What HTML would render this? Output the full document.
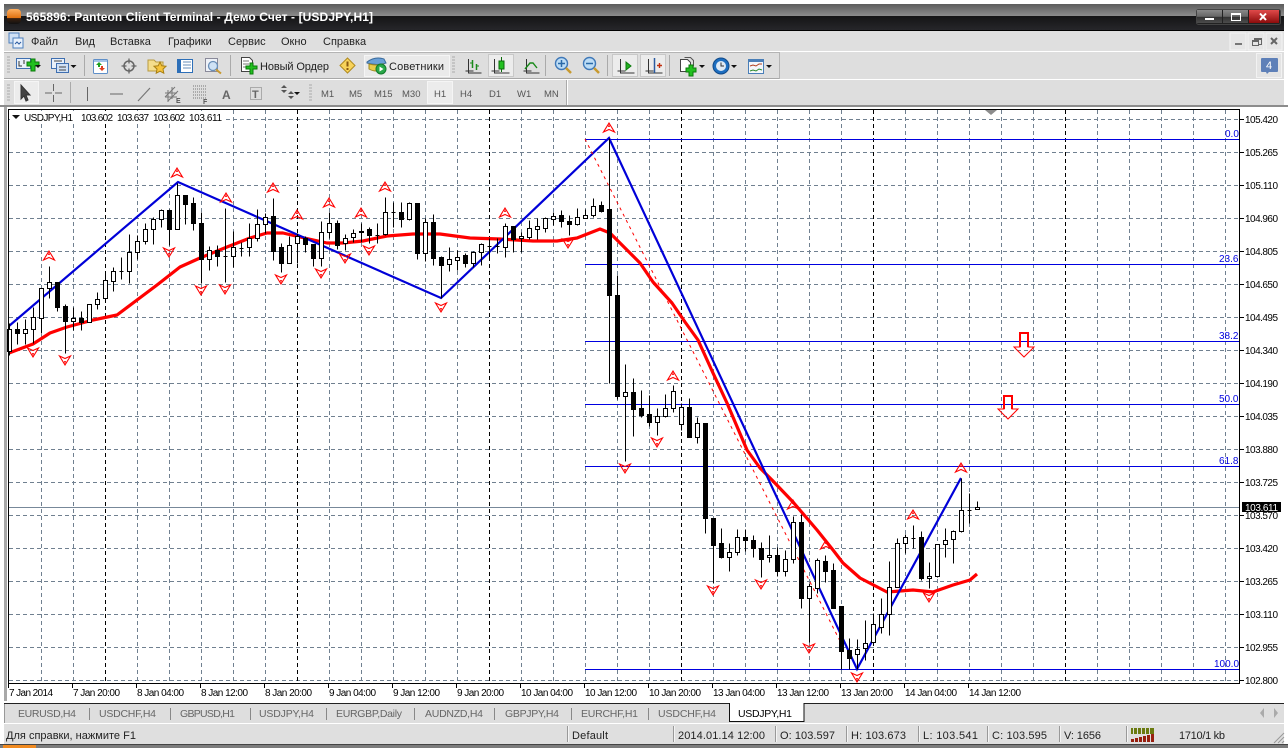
<!DOCTYPE html>
<html><head><meta charset="utf-8"><title>USDJPY,H1</title>
<style>
html,body{margin:0;padding:0;background:#fff;overflow:hidden}
svg{display:block;position:absolute;left:0;top:0}
text{font-family:"Liberation Sans","Noto Sans CJK SC",sans-serif}
.m{font-size:11px;fill:#222}
.p{font-size:10px;fill:#000}
.d{font-size:10px;fill:#000}
.t{font-size:10.5px;fill:#666}
.s{font-size:11px;fill:#222}
.f{font-size:10px;fill:#0000e0}
.tf{font-size:9.5px;fill:#555}
.c{shape-rendering:crispEdges}
</style></head><body>
<svg width="1288" height="748" viewBox="0 0 1288 748" xmlns="http://www.w3.org/2000/svg">
<defs>
<linearGradient id="tg" x1="0" y1="0" x2="0" y2="1"><stop offset="0" stop-color="#5c5c5c"/><stop offset="1" stop-color="#8c8c8c"/></linearGradient>
<linearGradient id="tg2" x1="0" y1="0" x2="0" y2="1"><stop offset="0" stop-color="#141415"/><stop offset="1" stop-color="#26262a"/></linearGradient>
<linearGradient id="or" x1="0" y1="0" x2="0" y2="1"><stop offset="0" stop-color="#ffb060"/><stop offset=".6" stop-color="#e07010"/><stop offset=".62" stop-color="#3a2010"/><stop offset="1" stop-color="#111"/></linearGradient>
<linearGradient id="rd" x1="0" y1="0" x2="0" y2="1"><stop offset="0" stop-color="#e04a4a"/><stop offset="1" stop-color="#8c0c0c"/></linearGradient>
<linearGradient id="gb" x1="0" y1="0" x2="0" y2="1"><stop offset="0" stop-color="#8a8a8a"/><stop offset=".5" stop-color="#666"/><stop offset=".55" stop-color="#333"/><stop offset="1" stop-color="#4c4c4c"/></linearGradient>
<g id="up"><path d="M0-5 5.500 4 0 1.500-5.500 4Z" fill="none" stroke="#f00" stroke-width="1.100"/><path d="M0-4-1 -1H1Z" fill="#f00"/></g>
<g id="dn"><path d="M0 5 5.500-4 0-1.500-5.500-4Z" fill="none" stroke="#f00" stroke-width="1.100"/><path d="M0 4-1 1H1Z" fill="#f00"/></g>
<g id="arr"><path d="M0 0h6l-3 3z" fill="#111"/></g>
</defs>

<!-- window frame -->
<rect width="1288" height="748" fill="#fff"/>
<rect x="4" y="4" width="1280" height="12" fill="url(#tg)"/>
<rect x="4" y="16" width="1280" height="14" fill="url(#tg2)"/>
<rect x="4" y="30" width="1280" height="1" fill="#000"/>
<rect x="7" y="9" width="14" height="15" rx="4" fill="url(#or)"/>
<text x="26" y="21" font-size="12" font-weight="700" fill="#fff" textLength="347">565896: Panteon Client Terminal - Демо Счет - [USDJPY,H1]</text>
<!-- caption buttons -->
<rect x="1196.500" y="9.500" width="84" height="15" rx="2" fill="#222" stroke="#444"/>
<rect x="1197" y="10" width="25" height="13" fill="url(#gb)"/>
<rect x="1223" y="10" width="25" height="13" fill="url(#gb)"/>
<rect x="1249" y="10" width="30" height="13" fill="url(#rd)"/>
<rect x="1205" y="18" width="9" height="2" fill="#fff"/>
<rect x="1231.500" y="13.500" width="9" height="7" fill="none" stroke="#fff"/><rect x="1231" y="13" width="10" height="2" fill="#fff"/>
<path d="M1260 13.500l6 6.500M1266 13.500l-6 6.500" stroke="#fff" stroke-width="2"/>

<!-- menu bar -->
<rect x="4" y="31" width="1280" height="20" fill="#dfdfdf"/>
<rect x="4" y="51" width="1280" height="1" fill="#fff"/>
<rect x="9" y="33" width="10" height="10" fill="#cfe0f5" stroke="#4d7fbd"/>
<rect x="13" y="38" width="10" height="10" fill="#e9f1fb" stroke="#4d7fbd"/>
<path d="M15 44l2-2 2 2 2-2" stroke="#2a5aa0" fill="none"/>
<text class="m" x="31" y="45">Файл</text>
<text class="m" x="75" y="45">Вид</text>
<text class="m" x="110" y="45">Вставка</text>
<text class="m" x="168" y="45">Графики</text>
<text class="m" x="228" y="45">Сервис</text>
<text class="m" x="281" y="45">Окно</text>
<text class="m" x="323" y="45">Справка</text>
<g class="c"><rect x="1230" y="33" width="16" height="17" fill="#e6e6e6" stroke="#f4f4f4"/><rect x="1248" y="33" width="16" height="17" fill="#e6e6e6" stroke="#f4f4f4"/><rect x="1266" y="33" width="16" height="17" fill="#e6e6e6" stroke="#f4f4f4"/></g>
<rect x="1235" y="43" width="7" height="2" fill="#777"/>
<path d="M1254.500 38.500h7v6h-3M1252.500 40.500h6v5h-6z" fill="none" stroke="#666"/><rect x="1254" y="38" width="8" height="2" fill="#666"/><rect x="1252" y="40" width="7" height="2" fill="#666"/>
<path d="M1271 38l6 6M1277 38l-6 6" stroke="#666" stroke-width="2"/>

<!-- toolbars background -->
<rect x="4" y="52" width="1280" height="53" fill="#dedede"/>
<g class="c">
<rect x="4" y="52" width="775" height="1" fill="#b4b4b4"/>
<rect x="4" y="78" width="775" height="1" fill="#a8a8a8"/>
<rect x="4" y="79" width="1280" height="1" fill="#fff"/>
<rect x="779" y="52" width="1" height="27" fill="#b4b4b4"/>
<rect x="566" y="80" width="1" height="25" fill="#aaa"/><rect x="567" y="80" width="1" height="25" fill="#fff"/>
<rect x="0" y="105" width="1288" height="2" fill="#8c8c8c"/>
<rect x="4" y="107" width="3" height="594" fill="#a8a8a8"/>
<rect x="1284" y="107" width="1" height="594" fill="#eee"/>
<!-- grips -->
<path d="M7 57h3M7 60h3M7 63h3M7 66h3M7 69h3M7 72h3M7 85h3M7 88h3M7 91h3M7 94h3M7 97h3M7 100h3M309 85h3M309 88h3M309 91h3M309 94h3M309 97h3M309 100h3M452 57h3M452 60h3M452 63h3M452 66h3M452 69h3M452 72h3" stroke="#aaa" stroke-width="1" stroke-dasharray="0"/>
<!-- separators -->
<path d="M84.500 55v21M230.500 55v21M545.500 55v21M607.500 55v21M669.500 55v21M70.500 82v21" stroke="#aaa" fill="none"/>
</g>

<!-- Toolbar 1 icons -->
<g>
 <!-- new chart -->
 <rect x="16.500" y="58.500" width="14" height="10" fill="#e8f0fa" stroke="#3f6fb0"/>
 <path d="M19 61v5h3M24 60v4" stroke="#333" fill="none"/>
 <path d="M27 62h4v-3h4v3h4v4h-4v5h-4v-5h-4z" fill="#22c020" stroke="#0a7a0a"/>
 <use href="#arr" x="35" y="65"/>
 <!-- profiles -->
 <rect x="51.500" y="58.500" width="13" height="10" fill="#e8f0fa" stroke="#3f6fb0"/>
 <rect x="56.500" y="63.500" width="12" height="9" fill="#cfe0f5" stroke="#3f6fb0"/>
 <path d="M54 61h8M59 67h7M59 70h7" stroke="#444"/>
 <use href="#arr" x="70.500" y="65"/>
 <!-- market watch -->
 <rect x="93.500" y="59.500" width="14" height="14" rx="1" fill="#fff" stroke="#5f8fc8"/>
 <rect x="94" y="60" width="13" height="2" fill="#a5c4e8"/>
 <path d="M99 62l3 3h-2v2h-2v-2h-2z" fill="#20a020"/>
 <path d="M102 71l-3-3h2v-2h2v2h2z" fill="#e04020"/>
 <!-- crosshair -->
 <circle cx="129" cy="66" r="5" fill="none" stroke="#666" stroke-width="1.500"/>
 <path d="M129 58.500v5M129 68.500v5M121.500 66h5M131.500 66h5" stroke="#666" stroke-width="1.300"/>
 <!-- folder star -->
 <path d="M148 60h6l2 2h7v9h-15z" fill="#f4dd8c" stroke="#b89a40"/>
 <path d="M160 62l1.800 3.800 4.200.5-3 2.800.8 4.100-3.800-2-3.800 2 .8-4.100-3-2.800 4.200-.5z" fill="#f6c43c" stroke="#a87f12"/>
 <!-- book -->
 <rect x="177.500" y="59.500" width="15" height="13" fill="#fff" stroke="#2d6fb8"/>
 <rect x="177" y="59" width="4" height="14" fill="#2d6fb8"/>
 <path d="M183 62h8M183 65h8M183 68h8" stroke="#6a8fb8"/>
 <!-- search chart -->
 <rect x="205.500" y="58.500" width="12" height="13" fill="#eef2f8" stroke="#8a8a9a"/>
 <circle cx="213" cy="66" r="4.500" fill="#cfe2f5" stroke="#6a8fb8" stroke-width="1.300"/>
 <path d="M216 69.500l5 4" stroke="#c89a30" stroke-width="2"/>
 <!-- new order -->
 <path d="M241.500 57.500h8l3 3v11h-11z" fill="#fff" stroke="#444"/>
 <path d="M243 61h6M243 64h6M243 67h5" stroke="#777"/>
 <path d="M246 66h4v-3h3v3h4v3h-4v5h-3v-5h-4z" fill="#22c020" stroke="#0a7a0a"/>
 <text x="260" y="70" font-size="11" fill="#222" textLength="69">Новый Ордер</text>
 <!-- warning -->
 <path d="M347.500 58l7.500 7.500-7.500 7.500-7.500-7.500z" fill="#f8d35a" stroke="#b08a20"/>
 <path d="M347.500 61.500v5" stroke="#8a5a10" stroke-width="2"/><rect x="346.500" y="68" width="2" height="2" fill="#8a5a10"/>
 <!-- advisors -->
 <rect x="364.500" y="55.500" width="85" height="21" fill="#eaeaea" stroke="#f5f5f5" class="c"/>
 <path d="M367 62q8-6 17-3l2 4q-9 3-19 0z" fill="#6aa0d8" stroke="#3a6a9a"/>
 <path d="M369 64q8 2 14 0v5q-7 4-14 0z" fill="#e8cb4a" stroke="#a08a20"/>
 <circle cx="381" cy="69" r="5" fill="#2aa84a" stroke="#117a2a"/>
 <path d="M379.500 66.500l4 2.500-4 2.500z" fill="#fff"/>
 <text x="389" y="70" font-size="11" fill="#222" textLength="55">Советники</text>
 <!-- bars -->
 <g fill="none" stroke="#333">
  <path d="M468.500 59v14h13M465.500 71h8" />
 </g>
 <path d="M472.500 60v8M476.500 64v6" stroke="#1a8a1a" stroke-width="1.500"/>
 <path d="M470 63h2M477 66h2" stroke="#1a8a1a"/>
 <!-- candle pressed -->
 <rect x="488.500" y="54.500" width="25" height="22" fill="#ececec" stroke="#c8c8c8" class="c"/>
 <path d="M494.500 59v14h15M491.500 71h8" fill="none" stroke="#333"/>
 <rect x="499" y="61" width="5" height="8" fill="#22c020" stroke="#0a6a0a"/><path d="M501.500 57v4M501.500 69v3" stroke="#0a6a0a"/>
 <!-- line -->
 <path d="M526.500 59v14h13M523.500 71h8" fill="none" stroke="#333"/>
 <path d="M525 69l5-6 3 0 4 5" fill="none" stroke="#1a8a1a" stroke-width="1.400"/>
 <!-- zoom in/out -->
 <circle cx="561.500" cy="63.500" r="6" fill="#bcdcf5" stroke="#3f78b8" stroke-width="1.400"/>
 <path d="M558 63.500h7M561.500 60v7" stroke="#2a6aa8" stroke-width="1.500"/>
 <path d="M566 68l5 5" stroke="#c89a30" stroke-width="2.500"/>
 <circle cx="589.500" cy="63.500" r="6" fill="#bcdcf5" stroke="#3f78b8" stroke-width="1.400"/>
 <path d="M586 63.500h7" stroke="#2a6aa8" stroke-width="1.500"/>
 <path d="M594 68l5 5" stroke="#c89a30" stroke-width="2.500"/>
 <!-- autoscroll -->
 <rect x="612.500" y="54.500" width="25" height="22" fill="#ececec" stroke="#c8c8c8" class="c"/>
 <path d="M620.500 59v14h14M617.500 71h8" fill="none" stroke="#333"/>
 <path d="M626 62l5 4-5 4z" fill="#22b020" stroke="#0a7a0a"/>
 <!-- shift -->
 <rect x="640.500" y="54.500" width="25" height="22" fill="#ececec" stroke="#c8c8c8" class="c"/>
 <path d="M648.500 59v14h14M645.500 71h8" fill="none" stroke="#333"/>
 <path d="M654.500 58v15" stroke="#2a5aa0" stroke-width="1.500"/>
 <path d="M657 65.500h5M659.500 63v5" stroke="#c03010" stroke-width="1.400"/>
 <!-- template -->
 <path d="M680.500 59.500h7l3 3v9h-10z" fill="#fff" stroke="#444"/><path d="M684.500 57.500h6l3 3v6" fill="none" stroke="#555"/>
 <path d="M686 68h3v-3h4v3h3v4h-3v4h-4v-4h-3z" fill="#22c020" stroke="#0a7a0a"/>
 <use href="#arr" x="699" y="65"/>
 <!-- clock -->
 <circle cx="721" cy="66" r="8" fill="#1d6ec0" stroke="#124a88"/>
 <circle cx="721" cy="66" r="5" fill="#dfeaf5"/>
 <path d="M721 62.500v3.500h3" stroke="#333" fill="none"/>
 <use href="#arr" x="731" y="65"/>
 <!-- indicators -->
 <rect x="748.500" y="59.500" width="15" height="14" fill="#f4f7fb" stroke="#4a7fb8"/>
 <rect x="749" y="60" width="14" height="2" fill="#4a7fb8"/>
 <path d="M750 66l3-1 3 1 3-2 3 0" stroke="#b04020" fill="none"/>
 <path d="M750 71l3-1 3 1 3-2 3 1" stroke="#2a8a2a" fill="none"/>
 <use href="#arr" x="766" y="65"/>
 <!-- message -->
 <rect x="1256.500" y="53.500" width="25" height="24" fill="#e4e4e4" stroke="#f2f2f2" class="c"/>
 <path d="M1262 58h15q1 0 1 1v12q0 1-1 1h-8l-2 2-1-2h-4q-1 0-1-1v-12q0-1 1-1z" fill="#5e80b8"/>
 <text x="1266" y="69" font-size="11" fill="#fff">4</text>
</g>

<!-- Toolbar 2 -->
<rect x="14.500" y="81.500" width="24" height="22" fill="#ececec" stroke="#f5f5f5" class="c"/>
<path d="M21 85v14l3-3 2 5 2-1-2-5h4z" fill="#444" stroke="#333"/>
<path d="M53.500 84v7M53.500 95v7M45 93h7M55 93h7" stroke="#666" fill="none" class="c"/>
<path d="M87.500 87v14" stroke="#666" class="c"/>
<path d="M110 94h13" stroke="#666" class="c"/>
<path d="M138 101l12-13" stroke="#777" stroke-width="1.200"/>
<path d="M165 97l10-10M168 101l10-10M168 90v12M172 87v12M165 93h12M165 97h12" stroke="#777" fill="none"/>
<text x="176" y="103" font-size="7" font-weight="700" fill="#555">E</text>
<path d="M193 86h13M193 89h13M193 92h13M193 95h13M193 98h13" stroke="#777" stroke-dasharray="1 1"/>
<text x="203" y="104" font-size="7" font-weight="700" fill="#555">F</text>
<text x="222" y="99" font-size="12" font-weight="700" fill="#666">A</text>
<rect x="250.500" y="87.500" width="11" height="12" fill="none" stroke="#777" stroke-dasharray="1 1"/>
<text x="252" y="98" font-size="11" font-weight="700" fill="#666">T</text>
<path d="M281 88l3-3 3 3zM281 90l3 3 3-3z" fill="#555"/>
<path d="M288 94l3-3 3 3zM288 96l3 3 3-3z" fill="#555"/>
<use href="#arr" x="294" y="92"/>
<rect x="427.500" y="81.500" width="25" height="22" fill="#ececec" stroke="#f5f5f5" class="c"/>
<text class="tf" x="321" y="97">M1</text>
<text class="tf" x="349" y="97">M5</text>
<text class="tf" x="374" y="97">M15</text>
<text class="tf" x="402" y="97">M30</text>
<text class="tf" x="434" y="97">H1</text>
<text class="tf" x="460" y="97">H4</text>
<text class="tf" x="489" y="97">D1</text>
<text class="tf" x="517" y="97">W1</text>
<text class="tf" x="544" y="97">MN</text>

<!-- Chart frame -->
<rect x="7" y="107" width="1278" height="596" fill="#fff"/>
<g class="c" fill="none">
<path d="M9 119.500H1238M9 152.500H1238M9 185.500H1238M9 218.500H1238M9 251.500H1238M9 284.500H1238M9 317.500H1238M9 350.500H1238M9 383.500H1238M9 416.500H1238M9 449.500H1238M9 482.500H1238M9 515.500H1238M9 548.500H1238M9 581.500H1238M9 614.500H1238M9 647.500H1238M9 680.500H1238" stroke="#708090" stroke-dasharray="4 3"/>
<path d="M41.500 110V683M73.500 110V683M137.500 110V683M169.500 110V683M201.500 110V683M233.500 110V683M265.500 110V683M329.500 110V683M361.500 110V683M393.500 110V683M425.500 110V683M457.500 110V683M521.500 110V683M553.500 110V683M585.500 110V683M617.500 110V683M649.500 110V683M713.500 110V683M745.500 110V683M777.500 110V683M809.500 110V683M841.500 110V683M905.500 110V683M937.500 110V683M969.500 110V683M1001.500 110V683M1033.500 110V683M1097.500 110V683M1129.500 110V683M1161.500 110V683M1193.500 110V683M1225.500 110V683" stroke="#708090" stroke-dasharray="4 3"/>
<path d="M105.500 110V683M297.500 110V683M489.500 110V683M681.500 110V683M873.500 110V683M1065.500 110V683" stroke="#000" stroke-dasharray="4 3"/>
<path d="M9 507.500H1239" stroke="#778899"/>
<!-- fibo -->
<path d="M585 139.500H1239M585 264.500H1239M585 341.500H1239M585 404.500H1239M585 466.500H1239M585 669.500H1239" stroke="#0000e0"/>
</g>
<text class="f" x="1225" y="137">0.0</text>
<text class="f" x="1219" y="262">23.6</text>
<text class="f" x="1219" y="339">38.2</text>
<text class="f" x="1219" y="402">50.0</text>
<text class="f" x="1219" y="464">61.8</text>
<text class="f" x="1214" y="667">100.0</text>

<!-- Moving average -->
<path d="M9 353L33 344 50 333 67 327 93 320 117 315 133 303 157 285 180 267 200 258 227 247 250 238 267 233 283 233 300 237 327 243 343 243 363 241 387 236 413 234 440 234 470 238 500 239 533 241 557 241 577 238 600 229 610 233 640 263 653 282 672 303 685 322 698 340 713 373 727 403 747 450 760 468 772 480 793 502 817 530 833 550 843 563 860 578 887 592 913 590 933 592 953 585 970 580 977 574" fill="none" stroke="#f00" stroke-width="3.200" stroke-linejoin="round"/>
<!-- ZigZag -->
<path d="M9 326L178 182 441 298 609 138 857 669 961 478" fill="none" stroke="#0000d8" stroke-width="2.200"/>
<path d="M585 139L840 641" fill="none" stroke="#f00" stroke-width="1" stroke-dasharray="3 4"/>

<!-- Candles -->
<g class="c" transform="translate(.5 .5)" stroke="#000" stroke-width="1">
<path fill="none" d="M9 323V355M17 322V344M25 319V344M33 307V343M41 288V333M49 266V298M57 282V311M65 304V353M73 307V330M81 311V330M89 304V322M97 292V309M105 272V298M113 267V291M121 257V279M129 234V283M137 235V259M145 223V244M153 217V244M161 209V227M169 209V245M177 183V229M185 195V224M193 197V230M201 212V283M209 246V270M217 245V266M225 208V282M233 231V267M241 242V256M249 223V256M257 209V241M265 213V233M273 198V260M281 243V272M289 236V263M297 233V263M305 236V252M313 244V266M321 221V266M329 212V238M337 220V249M345 234V250M353 229V242M361 223V242M369 227V243M377 223V243M385 197V235M393 202V227M401 202V227M409 202V220M417 203V259M425 218V261M433 214V265M441 256V298M449 247V271M457 250V270M465 253V267M473 251V267M481 243V265M489 238V257M497 238V253M505 223V257M513 226V252M521 232V252M529 220V239M537 218V239M545 217V232M553 212V225M561 210V227M569 215V235M577 208V225M585 209V218M593 198V217M601 201V212M609 138V383M617 275V399M625 364V461M633 378V436M641 390V417M649 395V426M657 408V435M665 394V417M673 385V412M681 403V430M689 398V437M697 417V443M705 423V533M713 518V583M721 528V558M729 543V571M737 529V555M745 529V551M753 535V557M761 542V577M769 535V562M777 547V576M785 550V576M793 516V563M801 514V608M809 583V642M817 558V593M825 555V582M833 563V608M841 606V669M849 638V669M857 639V669M865 620V660M873 613V643M881 598V633M889 561V635M897 538V587M905 534V553M913 525V548M921 531V580M929 562V588M937 544V577M945 528V557M953 530V563M961 478V532M969 493V523M977 501V509"/>
<path fill="none" d="M119 271h4M223 256h4M239 248h4M375 235h4M391 212h4M487 246h4M495 246h4M911 538h4M967 510h4"/>
<path fill="#fff" d="M7 329h4v22h-4zM23 329h4v4h-4zM31 317h4v12h-4zM39 288h4v30h-4zM47 282h4v6h-4zM71 318h4v3h-4zM87 304h4v18h-4zM95 299h4v5h-4zM103 280h4v18h-4zM111 271h4v10h-4zM127 252h4v19h-4zM135 241h4v11h-4zM143 229h4v12h-4zM151 219h4v10h-4zM159 210h4v9h-4zM175 195h4v34h-4zM207 250h4v9h-4zM231 247h4v9h-4zM247 238h4v9h-4zM255 224h4v14h-4zM263 217h4v7h-4zM287 245h4v18h-4zM295 236h4v7h-4zM319 232h4v26h-4zM327 223h4v9h-4zM343 238h4v5h-4zM351 233h4v4h-4zM359 231h4v1h-4zM383 212h4v22h-4zM407 203h4v16h-4zM423 222h4v31h-4zM447 259h4v5h-4zM455 257h4v3h-4zM471 252h4v11h-4zM479 244h4v8h-4zM503 226h4v21h-4zM519 236h4v2h-4zM527 228h4v9h-4zM535 226h4v3h-4zM543 218h4v10h-4zM551 216h4v3h-4zM575 217h4v7h-4zM583 215h4v3h-4zM591 206h4v9h-4zM623 392h4v4h-4zM655 416h4v6h-4zM663 408h4v8h-4zM671 391h4v17h-4zM679 407h4v17h-4zM695 423h4v14h-4zM727 552h4v5h-4zM735 537h4v15h-4zM767 555h4v2h-4zM783 559h4v12h-4zM791 522h4v37h-4zM807 586h4v12h-4zM815 560h4v28h-4zM855 649h4v5h-4zM863 643h4v5h-4zM871 624h4v18h-4zM879 614h4v13h-4zM887 587h4v27h-4zM895 543h4v44h-4zM903 537h4v6h-4zM927 576h4v2h-4zM935 544h4v32h-4zM943 540h4v4h-4zM951 531h4v8h-4zM959 510h4v21h-4zM975 507h4v2h-4z"/>
<path fill="#000" d="M15 329h4v4h-4zM55 282h4v25h-4zM63 306h4v15h-4zM79 318h4v4h-4zM167 210h4v19h-4zM183 195h4v9h-4zM191 203h4v20h-4zM199 223h4v36h-4zM215 250h4v6h-4zM271 216h4v35h-4zM279 247h4v16h-4zM303 238h4v6h-4zM311 244h4v14h-4zM335 223h4v22h-4zM367 229h4v6h-4zM399 212h4v7h-4zM415 203h4v50h-4zM431 222h4v36h-4zM439 257h4v8h-4zM463 255h4v8h-4zM511 226h4v13h-4zM559 215h4v6h-4zM567 221h4v3h-4zM599 205h4v6h-4zM607 209h4v86h-4zM615 295h4v101h-4zM631 392h4v17h-4zM639 408h4v7h-4zM647 414h4v8h-4zM687 407h4v30h-4zM703 423h4v95h-4zM711 518h4v27h-4zM719 543h4v14h-4zM743 537h4v3h-4zM751 540h4v8h-4zM759 548h4v11h-4zM775 555h4v16h-4zM799 522h4v76h-4zM823 561h4v10h-4zM831 570h4v38h-4zM839 606h4v45h-4zM847 650h4v8h-4zM919 537h4v41h-4z"/>
</g>

<!-- fractal arrows -->
<g>
<use href="#up" x="49" y="256"/><use href="#up" x="177" y="173"/><use href="#up" x="226" y="198"/><use href="#up" x="273" y="188"/><use href="#up" x="297" y="215"/><use href="#up" x="329" y="203"/><use href="#up" x="361" y="213"/><use href="#up" x="385" y="187"/><use href="#up" x="505" y="213"/><use href="#up" x="609" y="128"/><use href="#up" x="673" y="376"/><use href="#up" x="793" y="505"/><use href="#up" x="826" y="545"/><use href="#up" x="913" y="515"/><use href="#up" x="961" y="468"/>
<use href="#dn" x="33" y="352"/><use href="#dn" x="65" y="360"/><use href="#dn" x="169" y="252"/><use href="#dn" x="201" y="290"/><use href="#dn" x="225" y="289"/><use href="#dn" x="281" y="279"/><use href="#dn" x="321" y="273"/><use href="#dn" x="345" y="258"/><use href="#dn" x="369" y="250"/><use href="#dn" x="441" y="307"/><use href="#dn" x="568" y="243"/><use href="#dn" x="625" y="468"/><use href="#dn" x="657" y="442"/><use href="#dn" x="713" y="590"/><use href="#dn" x="761" y="584"/><use href="#dn" x="809" y="648"/><use href="#dn" x="857" y="677"/><use href="#dn" x="929" y="597"/>
</g>
<!-- big arrows -->
<g fill="#fff">
<path d="M1020 333h8v14h6l-10 10-10-10h6z" fill="none" stroke="#f00" stroke-width="1"/>
<path d="M1020 347v-14h8v14" fill="none" stroke="#f00" stroke-width="2"/>
<path d="M1004 396h8v13h6l-10 10-10-10h6z" fill="none" stroke="#f00" stroke-width="1"/>
<path d="M1004 409v-13h8v13" fill="none" stroke="#f00" stroke-width="2"/>
</g>

<!-- border + axis -->
<g class="c">
<rect x="8" y="109" width="1232" height="1" fill="#000"/>
<rect x="8" y="683" width="1232" height="1" fill="#000"/>
<rect x="8" y="109" width="1" height="575" fill="#000"/>
<rect x="1239" y="109" width="1" height="575" fill="#000"/>
<path d="M1240 119.500h4M1240 152.500h4M1240 185.500h4M1240 218.500h4M1240 251.500h4M1240 284.500h4M1240 317.500h4M1240 350.500h4M1240 383.500h4M1240 416.500h4M1240 449.500h4M1240 482.500h4M1240 515.500h4M1240 548.500h4M1240 581.500h4M1240 614.500h4M1240 647.500h4M1240 680.500h4" stroke="#000"/>
<path d="M8.500 684v4M72.500 684v4M136.500 684v4M200.500 684v4M264.500 684v4M328.500 684v4M392.500 684v4M456.500 684v4M520.500 684v4M584.500 684v4M648.500 684v4M712.500 684v4M776.500 684v4M840.500 684v4M904.500 684v4M968.500 684v4" stroke="#000"/>
</g>
<path d="M985 110h12l-6 5z" fill="#8c8c8c"/>

<!-- chart label -->
<rect x="10" y="111" width="213" height="12" fill="#fff"/>
<path d="M12 115h8l-4 4z" fill="#111"/>
<text class="p" x="24" y="121" textLength="49">USDJPY,H1</text>
<text class="p" x="81" y="121" textLength="32">103.602</text>
<text class="p" x="117" y="121" textLength="32">103.637</text>
<text class="p" x="153" y="121" textLength="32">103.602</text>
<text class="p" x="189" y="121" textLength="33">103.611</text>

<!-- price scale -->
<g>
<text class="p" x="1245" y="123" textLength="33">105.420</text>
<text class="p" x="1245" y="156" textLength="33">105.265</text>
<text class="p" x="1245" y="189" textLength="33">105.110</text>
<text class="p" x="1245" y="222" textLength="33">104.960</text>
<text class="p" x="1245" y="255" textLength="33">104.805</text>
<text class="p" x="1245" y="288" textLength="33">104.650</text>
<text class="p" x="1245" y="321" textLength="33">104.495</text>
<text class="p" x="1245" y="354" textLength="33">104.340</text>
<text class="p" x="1245" y="387" textLength="33">104.190</text>
<text class="p" x="1245" y="420" textLength="33">104.035</text>
<text class="p" x="1245" y="453" textLength="33">103.880</text>
<text class="p" x="1245" y="486" textLength="33">103.725</text>
<text class="p" x="1245" y="519" textLength="33">103.570</text>
<text class="p" x="1245" y="552" textLength="33">103.420</text>
<text class="p" x="1245" y="585" textLength="33">103.265</text>
<text class="p" x="1245" y="618" textLength="33">103.110</text>
<text class="p" x="1245" y="651" textLength="33">102.955</text>
<text class="p" x="1245" y="684" textLength="33">102.800</text>
<rect x="1242" y="502" width="39" height="10" fill="#000"/>
<text x="1245" y="511" font-size="10" fill="#fff" textLength="33">103.611</text>
</g>

<!-- time scale -->
<g>
<text class="d" x="9" y="696" textLength="44">7 Jan 2014</text>
<text class="d" x="73" y="696" textLength="47">7 Jan 20:00</text>
<text class="d" x="137" y="696" textLength="47">8 Jan 04:00</text>
<text class="d" x="201" y="696" textLength="47">8 Jan 12:00</text>
<text class="d" x="265" y="696" textLength="47">8 Jan 20:00</text>
<text class="d" x="329" y="696" textLength="47">9 Jan 04:00</text>
<text class="d" x="393" y="696" textLength="47">9 Jan 12:00</text>
<text class="d" x="457" y="696" textLength="47">9 Jan 20:00</text>
<text class="d" x="521" y="696" textLength="52">10 Jan 04:00</text>
<text class="d" x="585" y="696" textLength="52">10 Jan 12:00</text>
<text class="d" x="649" y="696" textLength="52">10 Jan 20:00</text>
<text class="d" x="713" y="696" textLength="52">13 Jan 04:00</text>
<text class="d" x="777" y="696" textLength="52">13 Jan 12:00</text>
<text class="d" x="841" y="696" textLength="52">13 Jan 20:00</text>
<text class="d" x="905" y="696" textLength="52">14 Jan 04:00</text>
<text class="d" x="969" y="696" textLength="52">14 Jan 12:00</text>
</g>

<!-- tabs -->
<rect x="4" y="703" width="1280" height="20" fill="#dedede"/>
<rect x="4" y="703" width="1280" height="1" fill="#222"/>
<rect x="4" y="723" width="1280" height="1" fill="#fff"/>
<rect x="4" y="704" width="1" height="19" fill="#999"/>
<path d="M89.500 708v12M170.500 708v12M250.500 708v12M326.500 708v12M414.500 708v12M494.500 708v12M571.500 708v12M648.500 708v12" stroke="#888" class="c"/>
<text class="t" x="18" y="717" textLength="58">EURUSD,H4</text>
<text class="t" x="99" y="717" textLength="57">USDCHF,H4</text>
<text class="t" x="180" y="717" textLength="55">GBPUSD,H1</text>
<text class="t" x="259" y="717" textLength="55">USDJPY,H4</text>
<text class="t" x="336" y="717" textLength="66">EURGBP,Daily</text>
<text class="t" x="425" y="717" textLength="58">AUDNZD,H4</text>
<text class="t" x="505" y="717" textLength="54">GBPJPY,H4</text>
<text class="t" x="581" y="717" textLength="57">EURCHF,H1</text>
<text class="t" x="658" y="717" textLength="58">USDCHF,H4</text>
<path d="M729.500 703v18.500h74.500V703" fill="#fff" stroke="#111" class="c"/>
<text x="738" y="717" font-size="10.500" fill="#000" textLength="54">USDJPY,H1</text>
<path d="M1264 708v10l-4-5zM1274 708v10l4-5z" fill="#aaa"/>

<!-- status bar -->
<rect x="4" y="724" width="1280" height="20" fill="#dfdfdf"/>
<text class="s" x="6" y="739" textLength="130">Для справки, нажмите F1</text>
<text class="s" x="572" y="739" textLength="36">Default</text>
<text class="s" x="678" y="739" textLength="87">2014.01.14 12:00</text>
<text class="s" x="780" y="739" textLength="55">O: 103.597</text>
<text class="s" x="851" y="739" textLength="55">H: 103.673</text>
<text class="s" x="923" y="739" textLength="55">L: 103.541</text>
<text class="s" x="992" y="739" textLength="55">C: 103.595</text>
<text class="s" x="1064" y="739" textLength="37">V: 1656</text>
<text class="s" x="1179" y="739" textLength="46">1710/1 kb</text>
<path d="M567.500 726v16M673.500 726v16M775.500 726v16M846.500 726v16M918.500 726v16M987.500 726v16M1059.500 726v16M1126.500 726v16" stroke="#999" class="c"/>
<path d="M568.500 726v16M674.500 726v16M776.500 726v16M847.500 726v16M919.500 726v16M988.500 726v16M1060.500 726v16M1127.500 726v16" stroke="#f4f4f4" class="c"/>
<g class="c">
<rect x="1131" y="728" width="23" height="6" fill="#6a7a10"/>
<path d="M1131 741h23v-7h-23z" fill="#dfdfdf"/>
<path d="M1131 742v-3h3v3zM1135 742v-4h3v4zM1139 742v-5h3v5zM1143 742v-6h3v6zM1147 742v-7h3v7zM1151 742v-8h3v8z" fill="#982010"/>
<path d="M1133.500 728v7M1137.500 728v7M1141.500 728v7M1145.500 728v7M1149.500 728v7" stroke="#dfdfdf"/>
</g>
<path d="M1274 743l10-10M1278 743l6-6M1282 743l2-2" stroke="#999" stroke-width="1"/>

<!-- bottom bar -->
<rect x="0" y="744" width="1288" height="4" fill="#7c7c7c"/>
<rect x="0" y="744" width="1288" height="1" fill="#444"/>
<rect x="3" y="745" width="33" height="3" fill="#f08a20"/>
</svg>
</body></html>
